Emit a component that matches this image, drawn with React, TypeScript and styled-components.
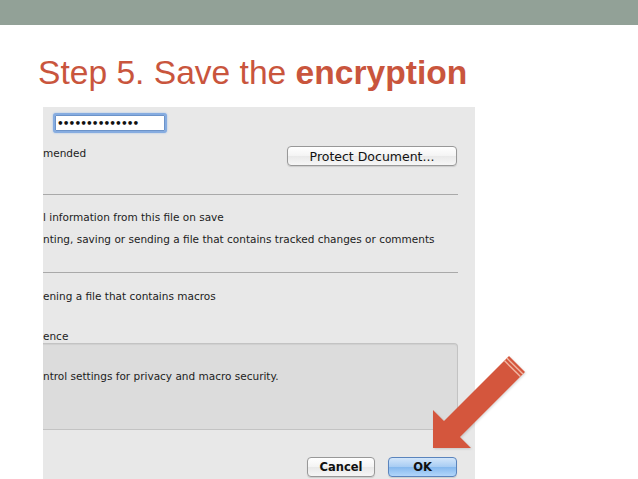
import styled, {createGlobalStyle} from 'styled-components'
import React from "react"

const GlobalStyle = createGlobalStyle`
	html, body {
		margin: 0;
		padding: 0;
		background: #ffffff;
	}
`

const Slide = styled.div`
	position: relative;
	width: 638px;
	height: 479px;
	overflow: hidden;
	background: #ffffff;
	display: flex;
	flex-direction: column;
`

const TopBar = styled.div`
	height: 25px;
	background-color: #92a197;
	flex-shrink: 0;
`

const Title = styled.h1`
	margin: 28px 0 14px 38px;
	font-family: "Liberation Sans", Arial, sans-serif;
	font-size: 33.6px;
	line-height: 40px;
	font-weight: normal;
	color: #c9553d;
	white-space: nowrap;

	& > b {
		font-weight: bold;
	}
`

const Screenshot = styled.div`
	margin-left: 43px;
	width: 432px;
	flex: 1;
	background-color: #e8e8e8;
	overflow: hidden;
	display: flex;
	flex-direction: column;
	font-family: "DejaVu Sans", Verdana, sans-serif;
	font-size: 10.5px;
	color: #1c1c1c;
`

const PasswordField = styled.div`
	box-sizing: border-box;
	margin: 6px 0 0 10px;
	width: 114px;
	height: 20px;
	border: 2px solid #86ace0;
	border-radius: 3px;
	box-shadow: 0 0 2px #9cbde8, inset 0 0 0 1px #6c93c9;
	background: #ffffff;
	display: flex;
	align-items: center;
	padding-left: 2px;
	font-size: 10.5px;
	font-weight: bold;
	letter-spacing: -0.9px;
	color: #111;
	overflow: hidden;
`

const OptionRow = styled.div`
	margin-top: 13px;
	width: 414px;
	height: 20px;
	display: flex;
	justify-content: space-between;
	align-items: flex-start;
`

const Line = styled.div<{ $top?: number }>`
	margin-top: ${props => props.$top || 0}px;
	line-height: 14px;
	white-space: nowrap;
`

const Separator = styled.div<{ $top: number }>`
	margin-top: ${props => props.$top}px;
	width: 415px;
	height: 1px;
	background-color: #a9a9a9;
	flex-shrink: 0;
`

const DescriptionBox = styled.div`
	box-sizing: border-box;
	width: 415px;
	height: 87px;
	padding-top: 25px;
	background-color: #dcdcdc;
	border: 1px solid #c3c3c3;
	border-left: none;
	border-radius: 0 4px 4px 0;
	box-shadow: inset 0 1px 1px rgba(0, 0, 0, 0.06);
	flex-shrink: 0;
`

const ButtonBar = styled.div`
	margin-top: 27px;
	width: 414px;
	display: flex;
	justify-content: flex-end;
	gap: 13px;
`

const AquaButton = styled.div<{ $primary?: boolean, $strong?: boolean, $width: number }>`
	box-sizing: border-box;
	width: ${props => props.$width}px;
	height: 20px;
	border-radius: 4px;
	border: 1px solid ${props => props.$primary ? '#5a84bd' : '#989898'};
	background: ${props => props.$primary
		? 'linear-gradient(#d3e6fa 0%, #a9cdf3 48%, #86b9ee 52%, #b2d6fa 100%)'
		: 'linear-gradient(#ffffff 0%, #f4f4f4 48%, #e9e9e9 52%, #f6f6f6 100%)'};
	box-shadow: 0 1px 1px rgba(0, 0, 0, 0.12);
	display: flex;
	align-items: center;
	justify-content: center;
	font-size: ${props => props.$strong ? '11.5px' : '12.5px'};
	font-weight: ${props => props.$strong ? 'bold' : 'normal'};
	color: #111;
	white-space: nowrap;
	flex-shrink: 0;
`

const ArrowSvg = styled.svg`
	position: absolute;
	left: 420px;
	top: 340px;
	width: 120px;
	height: 120px;
	overflow: visible;
`

const PointerArrow = () => (
	<ArrowSvg viewBox="0 0 120 120">
		<defs>
			<filter id="arrowShadow" x="-20%" y="-20%" width="140%" height="140%">
				<feDropShadow dx="1" dy="1" stdDeviation="1" floodColor="#000" floodOpacity="0.15"/>
			</filter>
		</defs>
		<polygon
			points="13,108 13,70 24,81 89,16 105,32 40,97 51,108"
			fill="#d4573c"
			filter="url(#arrowShadow)"
		/>
		<line x1="86.9" y1="18.1" x2="102.9" y2="34.1" stroke="#f1b7a3" strokeWidth="1.4"/>
		<line x1="84.4" y1="20.6" x2="100.4" y2="36.6" stroke="#f1b7a3" strokeWidth="1.4"/>
	</ArrowSvg>
)

const App = () => {
	return (
		<Slide>
			<GlobalStyle/>
			<TopBar/>
			<Title>Step 5. Save the <b>encryption</b></Title>
			<Screenshot>
				<PasswordField>••••••••••••••</PasswordField>
				<OptionRow>
					<Line>mended</Line>
					<AquaButton $width={170}>Protect Document...</AquaButton>
				</OptionRow>
				<Separator $top={28}/>
				<Line $top={15}>l information from this file on save</Line>
				<Line $top={8}>nting, saving or sending a file that contains tracked changes or comments</Line>
				<Separator $top={26}/>
				<Line $top={16}>ening a file that contains macros</Line>
				<Line $top={26}>ence</Line>
				<DescriptionBox>
					<Line>ntrol settings for privacy and macro security.</Line>
				</DescriptionBox>
				<ButtonBar>
					<AquaButton $width={68} $strong>Cancel</AquaButton>
					<AquaButton $width={69} $strong $primary>OK</AquaButton>
				</ButtonBar>
			</Screenshot>
			<PointerArrow/>
		</Slide>
	)
}

export default App
